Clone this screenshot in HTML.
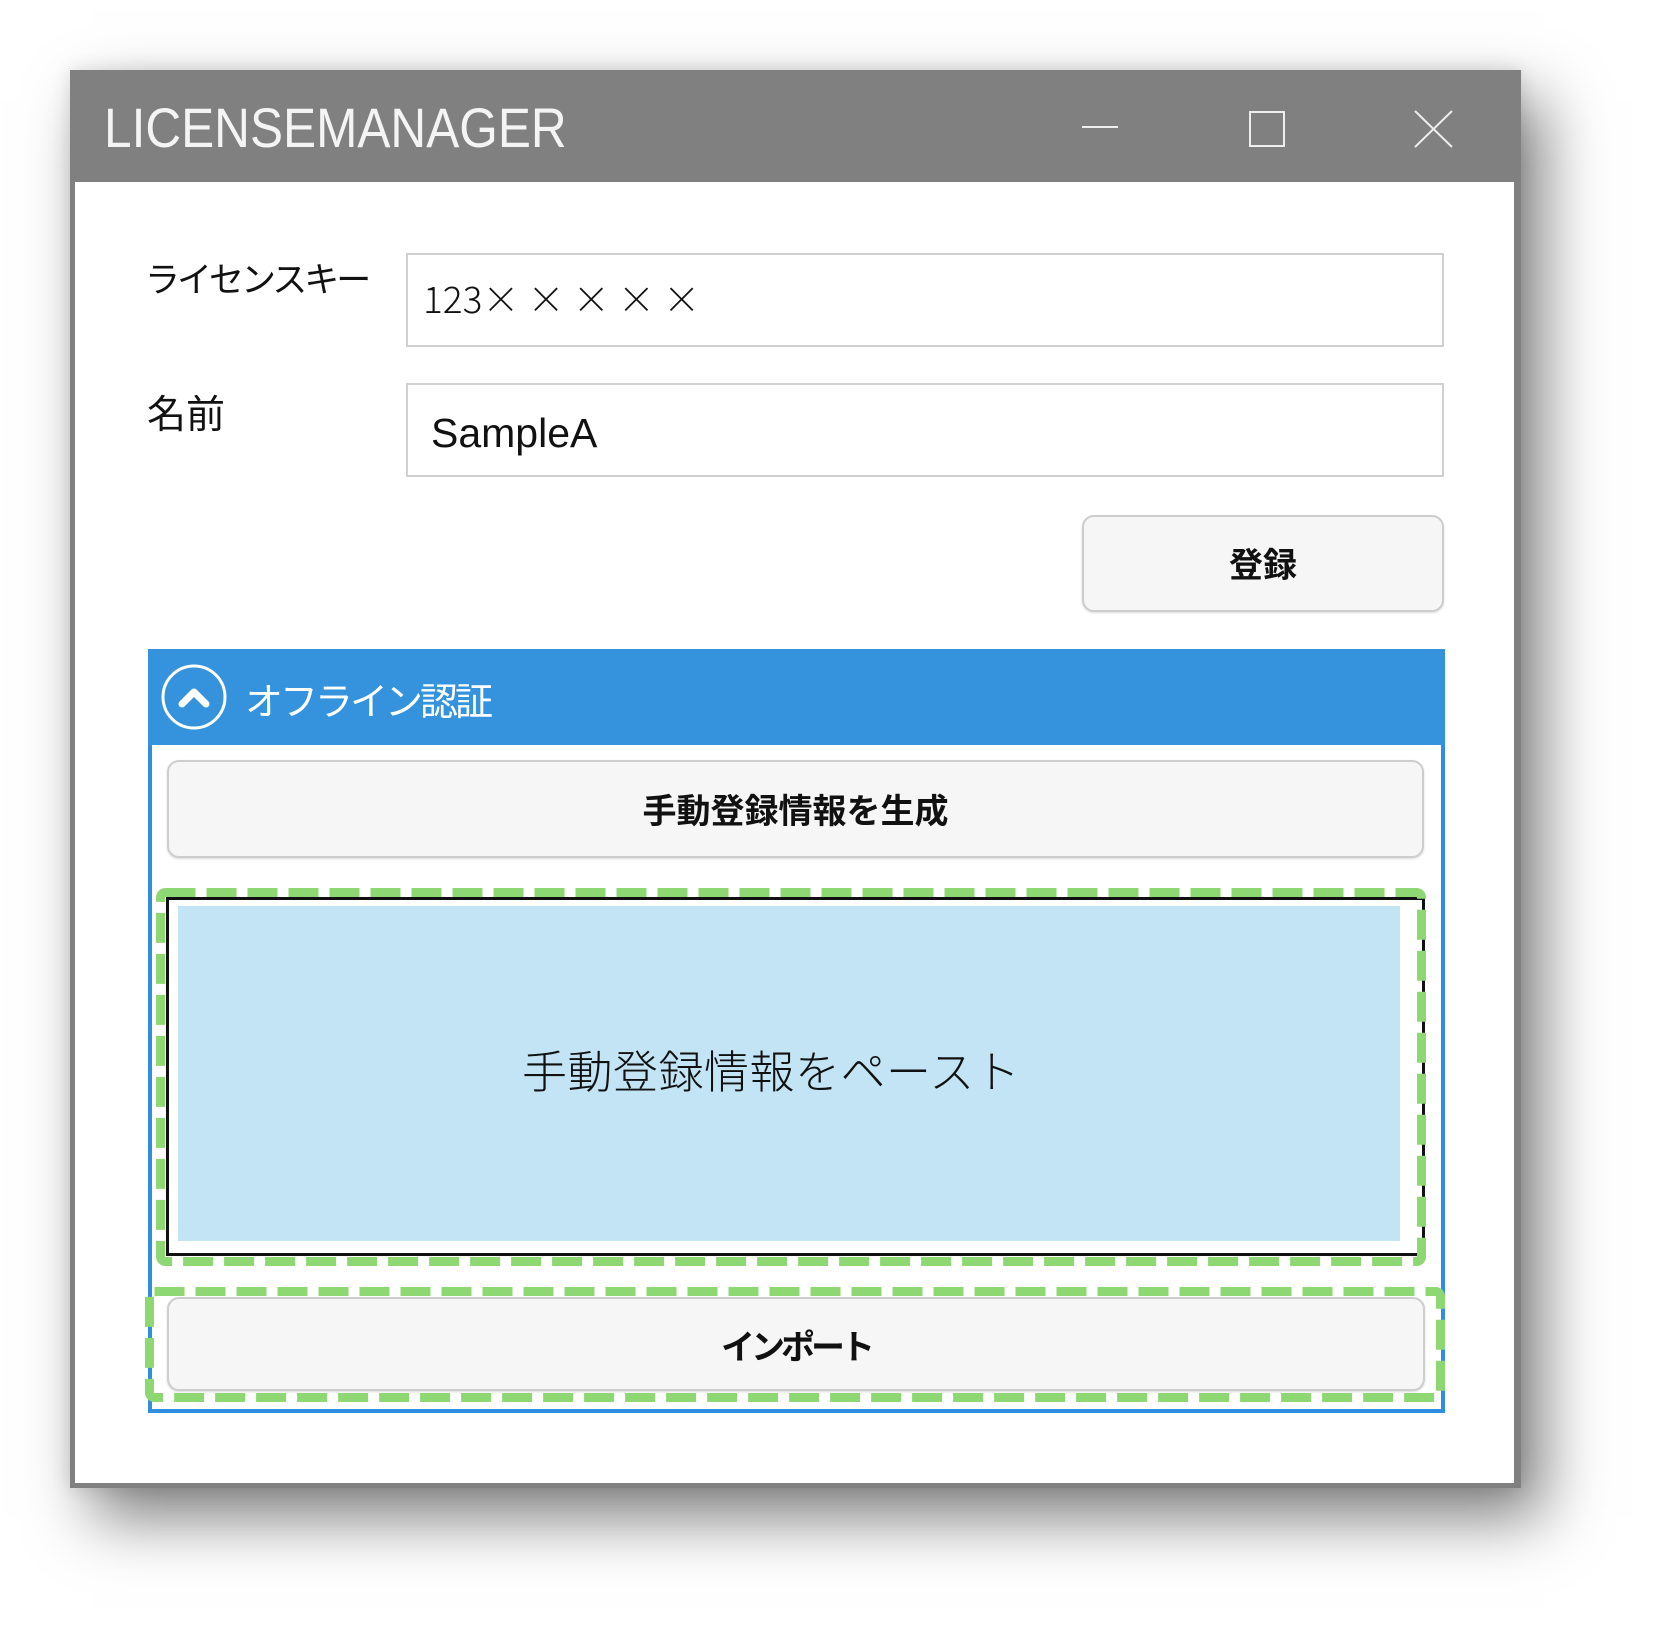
<!DOCTYPE html>
<html><head><meta charset="utf-8"><style>
*{margin:0;padding:0;box-sizing:border-box}
body{width:1661px;height:1631px;background:#fff;position:relative;overflow:hidden;font-family:"Liberation Sans","Noto Sans CJK JP",sans-serif}
.a{position:absolute}
.jp{font-family:"Noto Sans CJK JP","Liberation Sans",sans-serif}
.btn{position:absolute;background:#f6f6f6;border:2px solid #cdcdcd;border-radius:12px;box-shadow:0 1px 2px rgba(0,0,0,.15)}
.bt{position:absolute;left:0;right:0;text-align:center;font-weight:bold;font-size:34px;color:#111;line-height:1}
.inp{position:absolute;border:2px solid #d0d0d0;background:#fff}
</style></head><body>
<div class="a" style="left:70px;top:70px;width:1451px;height:1418px;box-shadow:22px 30px 60px rgba(0,0,0,.5),0 0 18px rgba(0,0,0,.12);background:#808080"></div>
<div class="a" style="left:75px;top:182px;width:1439px;height:1301px;background:#fff"></div>
<div class="a" style="left:104px;top:96px;font-size:56px;line-height:64px;color:#f4f4f4;transform:scaleX(0.885);transform-origin:left top;white-space:nowrap">LICENSEMANAGER</div>
<div class="a" style="left:1082px;top:126px;width:36px;height:2px;background:#eee"></div>
<div class="a" style="left:1249px;top:111px;width:36px;height:36px;border:2px solid #eee"></div>
<svg class="a" style="left:1413px;top:109px" width="41" height="40"><path d="M2 2L39 38M39 2L2 38" stroke="#eee" stroke-width="2"/></svg>

<div class="a jp" style="left:145px;top:258px;font-size:35px;line-height:40px;color:#111;letter-spacing:-3px;font-weight:400">ライセンスキー</div>
<div class="inp" style="left:406px;top:253px;width:1038px;height:94px"></div>
<div class="a jp" style="left:423px;top:277px;font-size:37px;line-height:40px;color:#111;font-weight:300">123× × × × ×</div>
<div class="a jp" style="left:147px;top:390px;font-size:39px;line-height:44px;color:#111;font-weight:400">名前</div>
<div class="inp" style="left:406px;top:383px;width:1038px;height:94px"></div>
<div class="a" style="left:431px;top:411px;font-size:41px;line-height:44px;color:#111">SampleA</div>

<div class="btn" style="left:1082px;top:515px;width:362px;height:97px"><div class="bt jp" style="top:29px">登録</div></div>

<div class="a" style="left:148px;top:649px;width:1297px;height:764px;border:4px solid #2f8ee0"></div>
<div class="a" style="left:148px;top:649px;width:1297px;height:96px;background:#3592dd"></div>
<svg class="a" style="left:160px;top:664px" width="68" height="68"><circle cx="34" cy="33" r="31" fill="none" stroke="#fff" stroke-width="3"/><path d="M22 40L34 28L46 40" fill="none" stroke="#fff" stroke-width="7" stroke-linejoin="round" stroke-linecap="round"/></svg>
<div class="a jp" style="left:245px;top:677px;font-size:38px;line-height:44px;color:#fff;letter-spacing:-3px;font-weight:400">オフライン認証</div>

<div class="btn" style="left:167px;top:760px;width:1257px;height:98px"><div class="bt jp" style="top:30px">手動登録情報を生成</div></div>

<div class="a" style="left:166px;top:897px;width:1259px;height:359px;border:3px solid #111;background:#fff"></div>
<div class="a" style="left:178px;top:906px;width:1222px;height:335px;background:#c2e4f4"></div>
<div class="a jp" style="left:522px;top:1043px;font-size:45px;line-height:52px;color:#111;font-weight:300;white-space:nowrap;letter-spacing:0.5px">手動登録情報をペースト</div>

<div class="btn" style="left:167px;top:1297px;width:1258px;height:94px"><div class="bt jp" style="top:29px;letter-spacing:-4px">インポート</div></div>

<svg class="a" style="left:0;top:0" width="1661" height="1631">
<rect x="160.5" y="892.5" width="1261" height="369" rx="5" fill="none" stroke="#8ed874" stroke-width="9" stroke-dasharray="30 11"/>
<rect x="149.5" y="1291.5" width="1291" height="106" rx="5" fill="none" stroke="#8ed874" stroke-width="9" stroke-dasharray="30 11"/>
</svg>
</body></html>
